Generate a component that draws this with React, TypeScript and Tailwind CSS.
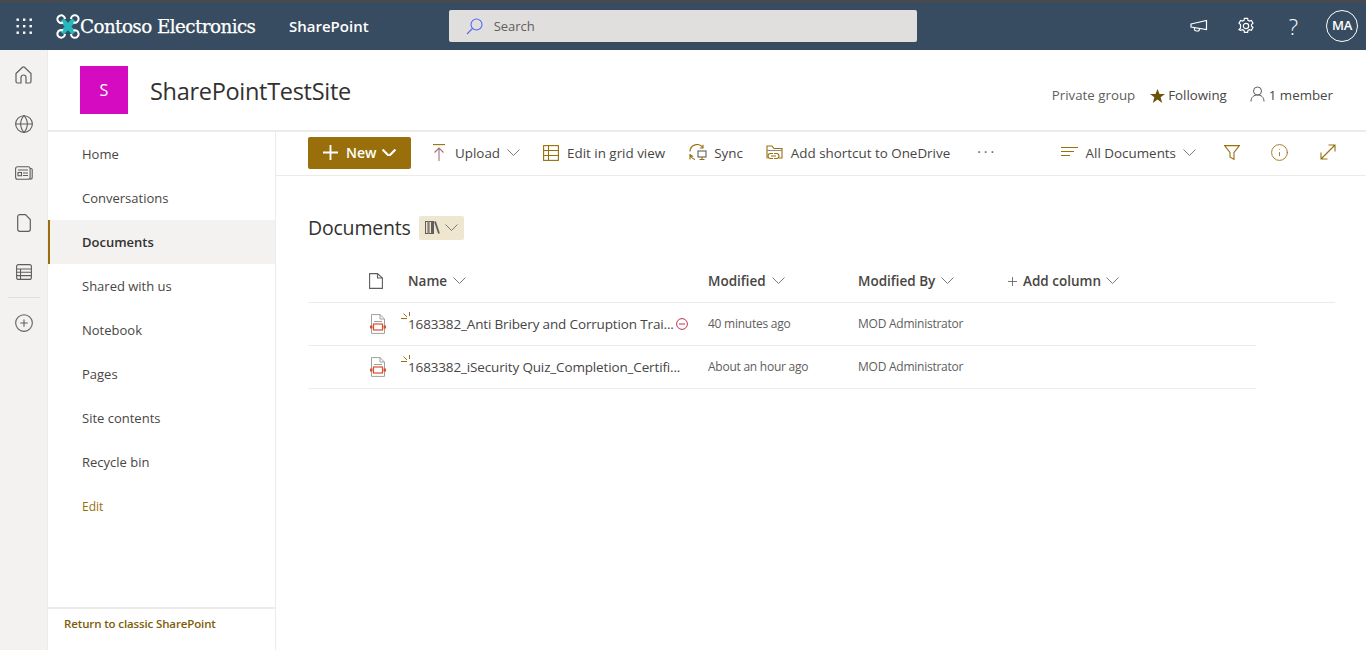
import { Globe, CirclePlus, Info } from "lucide-react";

const GOLD = "#986f0b";

const navItems = ["Home", "Conversations", "Documents", "Shared with us", "Notebook", "Pages", "Site contents", "Recycle bin"];

function Waffle() {
	const dots = [0, 1, 2, 3, 4, 5, 6, 7, 8];
	return (
		<svg width="16" height="16" viewBox="0 0 16 16" fill="#fff">
			{dots.map((d) => (
				<rect key={d} x={(d % 3) * 6.5 + 0.5} y={Math.floor(d / 3) * 6.5 + 0.5} width="2.4" height="2.4" />
			))}
		</svg>
	);
}

function Chevron({ color = "#7a7876", w = 13, stroke = 1, className = "" }: { color?: string; w?: number; stroke?: number; className?: string }) {
	return (
		<svg className={className} width={w} height={w * 0.55} viewBox="0 0 13 7.15" fill="none" stroke={color} strokeWidth={stroke}>
			<path d="M0.5 0.5L6.5 6.5L12.5 0.5" />
		</svg>
	);
}

function DroneLogo() {
	return (
		<svg width="24" height="25" viewBox="0 0 24 25" fill="none">
			<path d="M6 6 L18 19 M18 6 L6 19" stroke="#25b8bc" strokeWidth="5" />
			<g stroke="#fff" strokeWidth="2" fill="none">
				<path d="M7 8.5 A3.8 3.8 0 1 1 9 5" />
				<path d="M15 5 A3.8 3.8 0 1 1 17.5 8.5" />
				<path d="M7 16.5 A3.8 3.8 0 1 0 9 20" />
				<path d="M15 20 A3.8 3.8 0 1 0 17.5 16.5" />
			</g>
		</svg>
	);
}

function Megaphone() {
	return (
		<svg width="18" height="14" viewBox="0 0 18 14" fill="none" stroke="#fff" strokeWidth="1.2">
			<path d="M1 5 L16.5 1.5 V10.5 L1 8 Z" />
			<path d="M4.5 8.5 V10.5 Q4.5 12 6.5 12 H8 Q9.5 12 9.5 9.5" />
		</svg>
	);
}

function Gear() {
	return (
		<svg width="18" height="18" viewBox="0 0 18 18" fill="none" stroke="#fff" strokeWidth="1.2">
			<path d="M7.4 1.3h3.2l.4 2 1.5.8 1.9-.7 1.6 2.8-1.5 1.3v1.7l1.5 1.3-1.6 2.8-1.9-.7-1.5.8-.4 2H7.4l-.4-2-1.5-.8-1.9.7L2 12.5l1.5-1.3V7.5L2 6.2l1.6-2.8 1.9.7L7 3.3z" />
			<circle cx="9" cy="9" r="2.7" />
		</svg>
	);
}

function HomeIcon() {
	return (
		<svg width="17" height="18" viewBox="0 0 17 18" fill="none" stroke="#605e5c" strokeWidth="1.2">
			<path d="M1 7.5L7.5 1.3Q8.5 .5 9.5 1.3L16 7.5V15.5A1.5 1.5 0 0 1 14.5 17H11V11.5A2.5 2.5 0 0 0 6 11.5V17H2.5A1.5 1.5 0 0 1 1 15.5Z" />
		</svg>
	);
}

function NewsIcon() {
	return (
		<svg width="18" height="14" viewBox="0 0 18 14" fill="none" stroke="#605e5c" strokeWidth="1.1">
			<path d="M15 2.5H16A1.2 1.2 0 0 1 17.2 3.7V11.5Q17.2 13.2 15 13.2" />
			<rect x="0.6" y="0.8" width="14.5" height="12.4" rx="2" />
			<rect x="3" y="6.5" width="3.5" height="3.2" />
			<path d="M3 4H13M8 7H13M8 9.5H13" />
		</svg>
	);
}

function RailPageIcon() {
	return (
		<svg width="14" height="18" viewBox="0 0 14 18" fill="none" stroke="#605e5c" strokeWidth="1.2">
			<path d="M2.5 .7H8.5L13.3 5.5V15.3A2 2 0 0 1 11.3 17.3H2.7A2 2 0 0 1 .7 15.3V2.5A2 2 0 0 1 2.5 .7Z" />
		</svg>
	);
}

function HeaderPageIcon() {
	return (
		<svg width="14" height="16" viewBox="0 0 14 16" fill="none" stroke="#605e5c" strokeWidth="1.1">
			<path d="M.6 .6H8.5L13.4 5V15.4H.6Z" />
			<path d="M8.5 .6V5H13.4" />
		</svg>
	);
}

function ListsIcon() {
	return (
		<svg width="16" height="16" viewBox="0 0 16 16" fill="none" stroke="#605e5c" strokeWidth="1.1">
			<rect x="0.6" y="0.6" width="14.8" height="14.8" rx="2" />
			<path d="M0.6 5H15.4M0.6 8.3H15.4M0.6 11.6H15.4M4.5 5V15.4" />
		</svg>
	);
}

function UploadIcon() {
	return (
		<svg width="14" height="17" viewBox="0 0 14 17" fill="none" strokeWidth="1.1">
			<path d="M1 .6H13" stroke={GOLD} />
			<path d="M7 4V17M2.5 8.5L7 4L11.5 8.5" stroke="#a3717f" />
		</svg>
	);
}

function GridIcon() {
	return (
		<svg width="16" height="16" viewBox="0 0 16 16" fill="none" stroke={GOLD} strokeWidth="1.1">
			<rect x="0.6" y="0.6" width="14.8" height="14.8" />
			<path d="M0.6 5.5H15.4M0.6 10.5H15.4M5.5 .6V15.4" />
		</svg>
	);
}

function SyncIcon() {
	return (
		<svg width="18" height="17" viewBox="0 0 18 17" fill="none" strokeWidth="1.1">
			<path d="M1 7.5A7 7 0 0 1 14 4M14 .8V4H10.8" stroke={GOLD} />
			<path d="M1 10A7 7 0 0 0 6 15.5M1 15.5V10.8L4 12.5" stroke={GOLD} />
			<rect x="9" y="7" width="8" height="6" stroke="#5f5f5f" />
			<path d="M13 13V15.5M10.5 15.5H15.5" stroke={GOLD} />
		</svg>
	);
}

function ShortcutIcon() {
	return (
		<svg width="17" height="16" viewBox="0 0 17 16" fill="none" strokeWidth="1.1">
			<path d="M1 13.5V1H6L8 3.5H16V13H13" stroke={GOLD} />
			<path d="M1 5.5H16" stroke="#8a8a8a" />
			<path d="M7 8.5H4.5A2.3 2.3 0 0 0 4.5 13.5H7M8 8.5H10.5A2.3 2.3 0 0 1 10.5 13.5H8M5 11H10" stroke={GOLD} />
		</svg>
	);
}

function ViewIcon() {
	return (
		<svg width="17" height="12" viewBox="0 0 17 12" stroke={GOLD} strokeWidth="1.1">
			<path d="M0 1.5H17M0 5.5H13M0 9.5H9" />
		</svg>
	);
}

function FilterIcon() {
	return (
		<svg width="16" height="15" viewBox="0 0 16 15" fill="none" stroke={GOLD} strokeWidth="1.1">
			<path d="M.6 .6H15.4L10 7.5V14.4L6 12V7.5Z" />
		</svg>
	);
}

function ExpandIcon() {
	return (
		<svg width="16" height="16" viewBox="0 0 16 16" fill="none" stroke={GOLD} strokeWidth="1.1">
			<path d="M1 15L15 1M8.5 1H15V7.5M1 8.5V15H7.5" />
		</svg>
	);
}

function LibraryIcon() {
	return (
		<svg width="15" height="13" viewBox="0 0 15 13" fill="none" stroke="#605e5c" strokeWidth="1">
			<rect x="0.5" y="0.5" width="2.5" height="12" />
			<rect x="4" y="0.5" width="2.5" height="12" />
			<rect x="7.5" y="0.5" width="1" height="12" />
			<path d="M10 .5L14 12.5" strokeWidth="1.8" />
		</svg>
	);
}

function PlusIcon({ size, color, stroke }: { size: number; color: string; stroke: number }) {
	return (
		<svg width={size} height={size} viewBox="0 0 16 16" stroke={color} strokeWidth={stroke}>
			<path d="M8 0V16M0 8H16" />
		</svg>
	);
}

function PdfIcon() {
	return (
		<svg width="16" height="20" viewBox="0 0 16 20" fill="none">
			<path d="M1.5 .6H10L14.5 5V19.4H1.5Z" stroke="#a19f9d" fill="#fff" />
			<path d="M10 .6V5H14.5M4 7.5H12" stroke="#a19f9d" />
			<rect x="3.5" y="10" width="9" height="6" fill="#fff" stroke="#d9512c" strokeWidth="1.2" />
			<rect x="0" y="11.5" width="2.5" height="3" fill="#d9512c" />
			<rect x="13.5" y="11.5" width="2.5" height="3" fill="#d9512c" />
		</svg>
	);
}

function NewGlimmer() {
	return (
		<svg className="absolute left-[-7px] top-[-2px]" width="10" height="8" viewBox="0 0 10 8" fill="none" stroke={GOLD} strokeWidth="1">
			<path d="M0 6.5H6M2.5 1.5L6 5M8.5 0V4" />
		</svg>
	);
}

function ColumnHead({ label, width }: { label: string; width: string }) {
	return (
		<div className={`flex items-center ${width}`}>
			<span className="text-[13.5px] font-semibold text-[#484644]">{label}</span>
			<Chevron className="ml-[6px]" />
		</div>
	);
}

function FileRow({ name, when, blocked }: { name: string; when: string; blocked?: boolean }) {
	return (
		<div className="flex h-[43px] w-[948px] items-center border-b border-[#edebe9]">
			<div className="flex w-[100px] justify-end pr-[22px]">
				<PdfIcon />
			</div>
			<div className="flex w-[300px] items-center">
				<span className="relative text-[13.5px] tracking-[-0.15px] text-[#484644]">
					<NewGlimmer />
					{name}
				</span>
				{blocked && (
					<svg className="ml-[2px]" width="12" height="12" viewBox="0 0 12 12" fill="none" stroke="#c4314b" strokeWidth="1">
						<circle cx="6" cy="6" r="5.4" />
						<path d="M3 6H9" />
					</svg>
				)}
			</div>
			<div className="w-[150px] text-[12px] tracking-[-0.25px] text-[#605e5c]">{when}</div>
			<div className="text-[12px] tracking-[-0.25px] text-[#605e5c]">MOD Administrator</div>
		</div>
	);
}

// command bar label sits 1px lower than its icon
function Label({ text, className }: { text: string; className: string }) {
	return <span className={`mt-[2px] ${className}`}>{text}</span>;
}

export default function App() {
	return (
		<div className="flex h-[650px] w-[1366px] flex-col overflow-hidden bg-white font-['Open_Sans',sans-serif]">
			{/* Suite bar */}
			<header className="flex h-[50px] shrink-0 items-center border-t-2 border-[#4a4a4a] bg-[#374c60] text-white">
				<div className="flex w-[48px] justify-center">
					<Waffle />
				</div>
				<div className="ml-[8px] flex w-[233px] items-center">
					<DroneLogo />
					<span className="mt-[2px] font-['DejaVu_Serif',serif] text-[18.3px] tracking-[-0.55px] whitespace-nowrap [-webkit-text-stroke:0.25px_white]">Contoso Electronics</span>
				</div>
				<span className="mt-[1px] text-[15px] font-semibold">SharePoint</span>
				<div className="ml-[80px] flex h-[32px] w-[468px] items-center rounded-[2px] bg-[#e1dfdd] pl-[17px]">
					<svg width="17" height="17" viewBox="0 0 17 17" fill="none" stroke="#4f6bed" strokeWidth="1.1">
						<circle cx="10.5" cy="6.5" r="5.5" />
						<path d="M6.5 10.5L1 16" />
					</svg>
					<span className="ml-[11px] mt-[2px] text-[13px] text-[#605e5c]">Search</span>
				</div>
				<div className="ml-auto flex items-center pr-[8px]">
					<Megaphone />
					<span className="ml-[29px] flex">
						<Gear />
					</span>
					<span className="ml-[34px] text-[22px] leading-none font-light">?</span>
					<span className="ml-[28px] flex h-[32px] w-[32px] items-center justify-center rounded-full border border-white text-[13px] font-semibold tracking-[-0.2px]">MA</span>
				</div>
			</header>

			<div className="flex min-h-0 flex-1">
				{/* App bar */}
				<aside className="flex w-[48px] shrink-0 flex-col items-center border-r border-[#edebe9] bg-[#f3f2f1] pt-[16px]">
					<HomeIcon />
					<Globe size={20} strokeWidth={1.3} className="mt-[30px] text-[#605e5c]" />
					<span className="mt-[32px] flex">
						<NewsIcon />
					</span>
					<span className="mt-[34px] flex">
						<RailPageIcon />
					</span>
					<span className="mt-[32px] flex">
						<ListsIcon />
					</span>
					<div className="mt-[17px] h-px w-[32px] bg-[#e1dfdd]" />
					<CirclePlus size={20} strokeWidth={1.3} className="mt-[15px] text-[#605e5c]" />
				</aside>

				<div className="flex min-w-0 flex-1 flex-col">
					{/* Site header */}
					<div className="flex h-[82px] shrink-0 items-center border-b-2 border-[#edebe9] pb-[2px] pl-[32px] pr-[33px]">
						<div className="mt-[2px] flex h-[48px] w-[48px] items-center justify-center bg-[#d50bc2] text-[16px] text-white">S</div>
						<h1 className="ml-[22px] mt-[6px] text-[23.5px] font-medium tracking-[-0.3px] text-[#323130]">SharePointTestSite</h1>
						<div className="ml-auto mt-[13px] flex items-center text-[13.3px]">
							<span className="text-[#605e5c]">Private group</span>
							<svg className="ml-[15px]" width="15" height="14" viewBox="0 0 15 14" fill="#6f5209">
								<path d="M7.5 0L9.5 5H15L10.6 8.3L12.2 14L7.5 10.5L2.8 14L4.4 8.3L0 5H5.5Z" />
							</svg>
							<span className="ml-[3px] text-[#484644]">Following</span>
							<svg className="mb-[4px] ml-[23px]" width="15" height="16" viewBox="0 0 15 16" fill="none" stroke="#605e5c" strokeWidth="1">
								<circle cx="7.5" cy="5" r="4" />
								<path d="M1 15.5C1 11 4 9 7.5 9S14 11 14 15.5" />
							</svg>
							<span className="ml-[4px] text-[#484644]">1 member</span>
						</div>
					</div>

					<div className="flex min-h-0 flex-1">
						{/* Site nav */}
						<nav className="flex w-[228px] shrink-0 flex-col border-r border-[#edebe9]">
							<ul>
								{navItems.map((item) => {
									const active = item === "Documents";
									return (
										<li
											key={item}
											className={`flex h-[44px] items-center border-l-2 pl-[32px] pt-[2px] text-[13px] ${
												active ? "border-[#986f0b] bg-[#f3f2f1] font-semibold text-[#323130]" : "border-transparent text-[#484644]"
											}`}
										>
											{item}
										</li>
									);
								})}
								<li className="flex h-[44px] items-center pl-[34px] pt-[2px] text-[12px] text-[#986f0b]">Edit</li>
							</ul>
							<div className="mt-auto flex h-[43px] items-center border-t-2 border-[#edebe9] pb-[12px] pl-[16px] text-[11.5px] font-semibold tracking-[-0.13px] text-[#7d5c09]">
								Return to classic SharePoint
							</div>
						</nav>

						{/* Main */}
						<main className="min-w-0 flex-1">
							{/* Command bar */}
							<div className="flex h-[44px] items-center border-b border-[#edebe9] pb-[2px] pl-[32px] pr-[30px] text-[13.4px] text-[#484644]">
								<button type="button" className="flex h-[32px] w-[103px] items-center rounded-[2px] bg-[#986f0b] pl-[15px] text-[14px] font-semibold text-white">
									<PlusIcon size={15} color="#fff" stroke={2} />
									<span className="ml-[8px]">New</span>
									<Chevron color="#fff" w={14} stroke={2} className="ml-[6px]" />
								</button>
								<span className="ml-[21px] flex">
									<UploadIcon />
								</span>
								<Label text="Upload" className="ml-[9px]" />
								<Chevron className="ml-[7px]" />
								<span className="ml-[23px] flex">
									<GridIcon />
								</span>
								<Label text="Edit in grid view" className="ml-[8px]" />
								<span className="ml-[24px] flex">
									<SyncIcon />
								</span>
								<Label text="Sync" className="ml-[7px]" />
								<span className="ml-[23px] flex">
									<ShortcutIcon />
								</span>
								<Label text="Add shortcut to OneDrive" className="ml-[8px]" />
								<span className="mb-[2px] ml-[27px] text-[14px] tracking-[3px] text-[#605e5c]">···</span>
								<div className="ml-auto flex items-center">
									<ViewIcon />
									<Label text="All Documents" className="ml-[8px]" />
									<Chevron className="ml-[7px]" />
									<span className="ml-[28px] flex">
										<FilterIcon />
									</span>
									<Info size={19} strokeWidth={1.1} color={GOLD} className="ml-[30px]" />
									<span className="ml-[31px] flex">
										<ExpandIcon />
									</span>
								</div>
							</div>

							{/* Library */}
							<div className="pl-[32px] pr-[31px]">
								<div className="flex h-[84px] items-center pb-[12px] pt-[32px]">
									<h2 className="text-[19.5px] font-medium tracking-[-0.2px] text-[#323130]">Documents</h2>
									<div className="mb-[1px] ml-[8px] flex h-[24px] w-[45px] items-center rounded-[2px] bg-[#efe6cf] pl-[6px]">
										<LibraryIcon />
										<Chevron className="ml-[5px]" />
									</div>
								</div>

								<div className="flex h-[43px] items-center border-b border-[#edebe9]">
									<div className="flex w-[100px] justify-end pr-[25px]">
										<HeaderPageIcon />
									</div>
									<ColumnHead label="Name" width="w-[300px]" />
									<ColumnHead label="Modified" width="w-[150px]" />
									<ColumnHead label="Modified By" width="w-[150px]" />
									<div className="flex items-center">
										<PlusIcon size={9} color="#605e5c" stroke={1.5} />
										<span className="ml-[6px] text-[13.5px] font-semibold text-[#484644]">Add column</span>
										<Chevron className="ml-[5px]" />
									</div>
								</div>

								<FileRow name="1683382_Anti Bribery and Corruption Trai..." when="40 minutes ago" blocked />
								<FileRow name="1683382_iSecurity Quiz_Completion_Certifi..." when="About an hour ago" />
							</div>
						</main>
					</div>
				</div>
			</div>
		</div>
	);
}
